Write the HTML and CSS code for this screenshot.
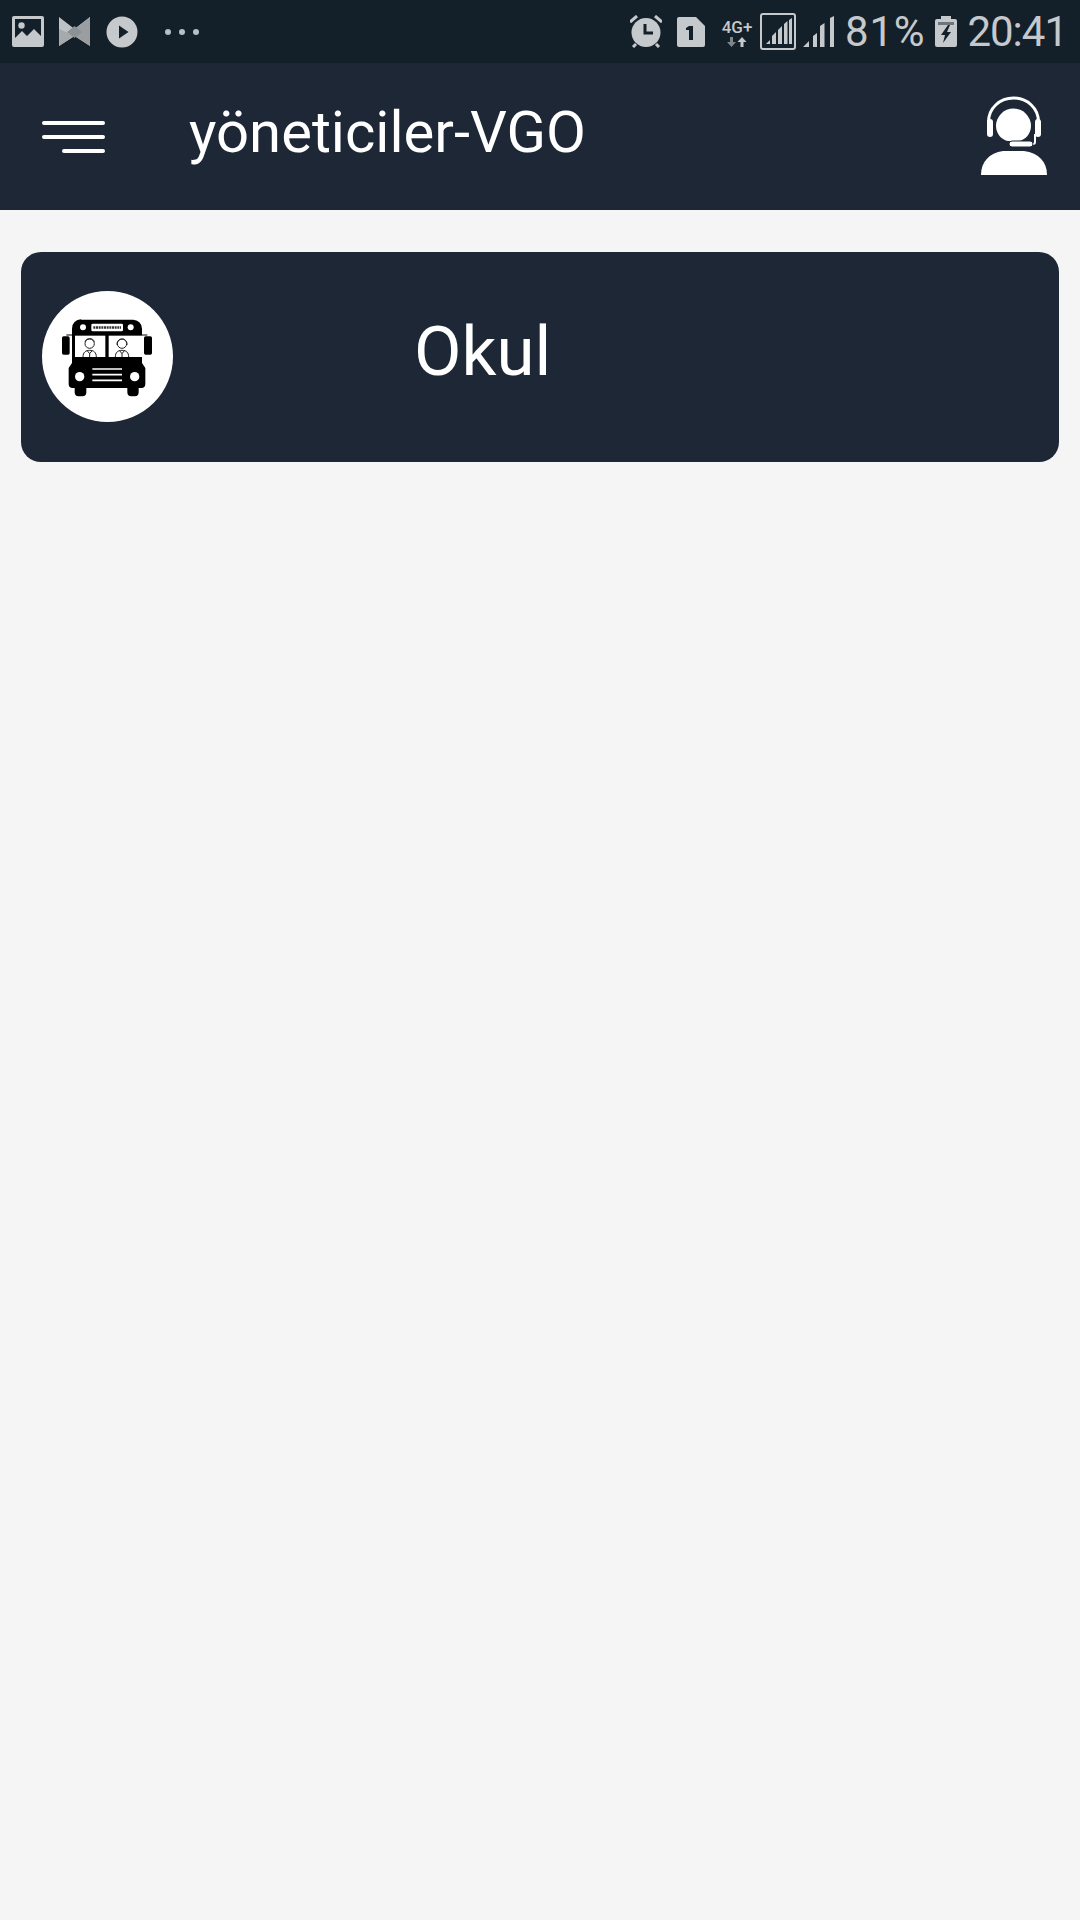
FILE: index.html
```html
<!DOCTYPE html>
<html lang="en">
<head>
<meta charset="UTF-8">
<meta name="viewport" content="width=device-width, initial-scale=1.0">
<title>yöneticiler-VGO</title>
<link rel="stylesheet" href="styles.css">
</head>
<body>
<!-- Phone status bar -->
<div class="status-bar">
  <div class="status-left">
    <svg class="icon-image" width="32" height="31" viewBox="0 0 32 31">
      <path fill="#c6c9cb" fill-rule="evenodd" d="M2 0h28a2 2 0 0 1 2 2v27a2 2 0 0 1-2 2H2a2 2 0 0 1-2-2V2a2 2 0 0 1 2-2zM3 3v19l7-7 5 5 7-7 7 7V3z"/>
      <circle cx="9.500" cy="9.500" r="3.200" fill="#c6c9cb"/>
    </svg>
    <svg class="icon-mosaic" width="31" height="30" viewBox="0 0 31 30">
      <path fill="#c0c3c5" d="M0 0l15.500 12L31 0v29L15.500 19 0 29z"/>
      <path fill="#9a9ea1" d="M31 0v29L15.500 19v-7z"/>
      <path fill="#a6aaac" d="M0 29V12l7 3 8.500 4z"/>
      <path fill="#8b9194" d="M8 15l7.500-6 7.500 6-7.500 6z"/>
    </svg>
    <svg class="icon-play" width="32" height="32" viewBox="0 0 32 32">
      <circle cx="16" cy="16" r="15.500" fill="#c6c9cb"/>
      <path fill="#142029" d="M13 9.500L22.500 16 13 22.500z"/>
    </svg>
    <div class="more-dots"><span></span><span></span><span></span></div>
  </div>
  <div class="status-right">
    <svg class="icon-alarm" width="32" height="33" viewBox="0 0 32 33">
      <circle cx="16" cy="17.500" r="14.500" fill="#c6c9cb"/>
      <path fill="none" stroke="#142029" stroke-width="3" d="M15 9v9h8"/>
      <path fill="none" stroke="#c6c9cb" stroke-width="3" d="M0 7l7-6M32 7l-7-6M6 29l-3 3M26 29l3 3"/>
    </svg>
    <svg class="icon-sim" width="28" height="30" viewBox="0 0 28 30">
      <path fill="#c6c9cb" d="M2 0h17l9 9v19a2 2 0 0 1-2 2H2a2 2 0 0 1-2-2V2a2 2 0 0 1 2-2z"/>
      <path fill="#142029" d="M12 9h4v14h-4v-10h-3v-2z"/>
    </svg>
    <div class="net-type">
      <span class="net-label">4G+</span>
      <svg width="20" height="10" viewBox="0 0 20 10">
        <path fill="#7f8689" d="M3 0h3v5h3l-4.500 5L0 5h3z"/>
        <path fill="#c6c9cb" d="M15 0l4.500 5h-3v5h-3V5h-3z"/>
      </svg>
    </div>
    <svg class="icon-signal-box" width="36" height="37" viewBox="0 0 36 37">
      <rect x="1" y="1" width="34" height="35" rx="2" fill="none" stroke="#c6c9cb" stroke-width="2"/>
      <path fill="#c6c9cb" d="M6 31l4-4v4zM12 31v-8l4-4v12zM18 31V17l4-4v18zM24 31V11l3.500-3v23zM29 31V7l3-2v26z"/>
    </svg>
    <svg class="icon-signal" width="31" height="31" viewBox="0 0 31 31">
      <path fill="#c6c9cb" d="M0 31l6-6v6zM10 31V20l4-3v14zM17 31V10l4.500-3v24zM27 31V2l4-2v31z"/>
    </svg>
    <span class="status-text battery-text">81%</span>
    <svg class="icon-battery" width="22" height="31" viewBox="0 0 22 31">
      <path fill="#c6c9cb" d="M6 0h10v3h4a2 2 0 0 1 2 2v24a2 2 0 0 1-2 2H2a2 2 0 0 1-2-2V5a2 2 0 0 1 2-2h4z"/>
      <path fill="#6f7679" d="M3 6h16v3H3z"/>
      <path fill="#142029" d="M13 9l-7 10h4l-2 8 8-11h-4l3-7z"/>
    </svg>
    <span class="status-text clock-text">20:41</span>
  </div>
</div>

<!-- App header -->
<div class="app-header">
  <div class="menu-icon"><span></span><span></span><span class="short"></span></div>
  <h1 class="app-title">yöneticiler-VGO</h1>
  <svg class="agent-icon" width="68" height="80" viewBox="0 0 68 80">
    <path fill="#fff" d="M16 30a17.500 17.500 0 0 1 35 0c0 8-6 14-12 15H28c-6-1-12-7-12-15z"/>
    <path fill="none" stroke="#fff" stroke-width="3" d="M58.500 30V26C58.500 12 47 2 33.500 2S8.500 12 8.500 26v4"/>
    <rect x="7" y="23" width="6" height="18" rx="3" fill="#fff"/>
    <rect x="55" y="23" width="6" height="18" rx="3" fill="#fff"/>
    <path fill="none" stroke="#fff" stroke-width="2" d="M55 38v8a2 2 0 0 1-2 2H40"/>
    <rect x="29" y="45" width="24" height="6" rx="3" fill="#fff" stroke="#1d2736" stroke-width="1"/>
    <path fill="#fff" d="M1 79c0-13 8-22 22-24h21c15 2 23 11 23 24z"/>
  </svg>
</div>

<div class="content">
  <div class="school-card">
    <div class="bus-badge">
      <svg class="bus-icon" width="90" height="78" viewBox="92 118 270 234">
        <rect x="92" y="170" width="23" height="55" rx="5" fill="#000"/>
        <rect x="338" y="170" width="24" height="55" rx="5" fill="#000"/>
        <path fill="none" stroke="#000" stroke-width="3" d="M105 166h26M322 166h26"/>
        <path fill="#000" d="M150 120h155a27 27 0 0 1 27 27v103l10 15v48a12 12 0 0 1-12 12h-8v13a12 12 0 0 1-12 12h-10a12 12 0 0 1-12-12v-13H165v13a12 12 0 0 1-12 12h-11a12 12 0 0 1-12-12v-13h-6a12 12 0 0 1-12-12v-48l10-15V147a27 27 0 0 1 27-28z"/>
        <rect x="180" y="132" width="95" height="23" rx="4" fill="#fff"/>
        <path fill="none" stroke="#333" stroke-width="7" stroke-dasharray="6 2" d="M186 143.500h83"/>
        <circle cx="155" cy="143" r="9" fill="#fff"/>
        <circle cx="298" cy="143" r="9" fill="#fff"/>
        <rect x="131" y="168" width="91" height="64" fill="#fff"/>
        <rect x="232" y="168" width="100" height="64" fill="#fff"/>
        <g fill="none" stroke="#222" stroke-width="3">
          <circle cx="175" cy="192" r="14"/>
          <path d="M161 186c3-12 25-12 28 0M155 232c0-14 8-20 20-20s20 6 20 20M167 212l8 10 8-10M175 222v10"/>
          <circle cx="272" cy="192" r="14"/>
          <path d="M257 196c-2-24 32-24 30 0M252 232c0-14 8-20 20-20s20 6 20 20M264 212l8 10 8-10M272 222v10"/>
        </g>
        <circle cx="145" cy="291" r="14" fill="#fff"/>
        <circle cx="310" cy="291" r="14" fill="#fff"/>
        <path fill="none" stroke="#fff" stroke-width="5" d="M183 268h89M183 285h89M183 302h89"/>
      </svg>
    </div>
    <span class="school-name">Okul</span>
  </div>
</div>
</body>
</html>
```

FILE: styles.css
```css
html, body {
  margin: 0;
  padding: 0;
}
body {
  font-family: Roboto, "Liberation Sans", sans-serif;
  background-color: #f5f5f5;
  width: 1080px;
  height: 1920px;
  overflow: hidden;
}

/* status bar */
.status-bar {
  height: 63px;
  background-color: #142029;
  display: flex;
  justify-content: space-between;
  align-items: center;
  padding: 0 13px 0 12px;
  color: #c6c9cb;
}
.status-left,
.status-right {
  display: flex;
  align-items: center;
}
.icon-mosaic {
  margin-left: 15px;
}
.icon-play {
  margin-left: 16px;
}
.more-dots {
  display: flex;
  gap: 8px;
  margin-left: 27px;
}
.more-dots span {
  width: 6px;
  height: 6px;
  border-radius: 50%;
  background-color: #b3c0c6;
}
.icon-sim {
  margin-left: 15px;
}
.net-type {
  display: flex;
  flex-direction: column;
  align-items: center;
  margin-left: 15px;
  width: 34px;
}
.net-label {
  font-size: 17px;
  font-weight: 500;
  line-height: 20px;
}
.icon-signal-box {
  margin-left: 6px;
}
.icon-signal {
  margin-left: 7px;
}
.status-text {
  font-size: 42px;
  line-height: 50px;
  font-weight: 400;
}
.battery-text {
  margin-left: 11px;
  letter-spacing: 0.8px;
}
.clock-text {
  letter-spacing: -1px;
}
.icon-battery {
  margin-left: 10px;
  margin-right: 10px;
}

/* app header */
.app-header {
  height: 147px;
  background-color: #1d2736;
  display: flex;
  align-items: center;
  position: relative;
}
.menu-icon {
  display: flex;
  flex-direction: column;
  align-items: flex-end;
  gap: 10px;
  width: 63px;
  margin-left: 42px;
  margin-top: 1px;
}
.menu-icon span {
  width: 100%;
  height: 4px;
  border-radius: 2px;
  background-color: #fff;
}
.menu-icon .short {
  width: 43px;
}
.app-title {
  margin: -9px 0 0 84px;
  font-size: 58px;
  font-weight: 400;
  color: #fff;
}
.agent-icon {
  margin-left: auto;
  margin-right: 32px;
  margin-top: -2px;
}

/* list */
.content {
  padding: 42px 21px;
}
.school-card {
  height: 210px;
  background-color: #1d2736;
  border-radius: 20px;
  display: flex;
  align-items: center;
  padding-left: 21px;
}
.bus-badge {
  width: 131px;
  height: 131px;
  margin-top: -1px;
  border-radius: 50%;
  background-color: #fff;
  display: flex;
  align-items: center;
  justify-content: center;
}
.bus-icon {
  margin-left: -2px;
  margin-top: 3px;
}
.school-name {
  margin-left: 241px;
  margin-top: -11px;
  font-size: 69px;
  color: #fff;
}
```
